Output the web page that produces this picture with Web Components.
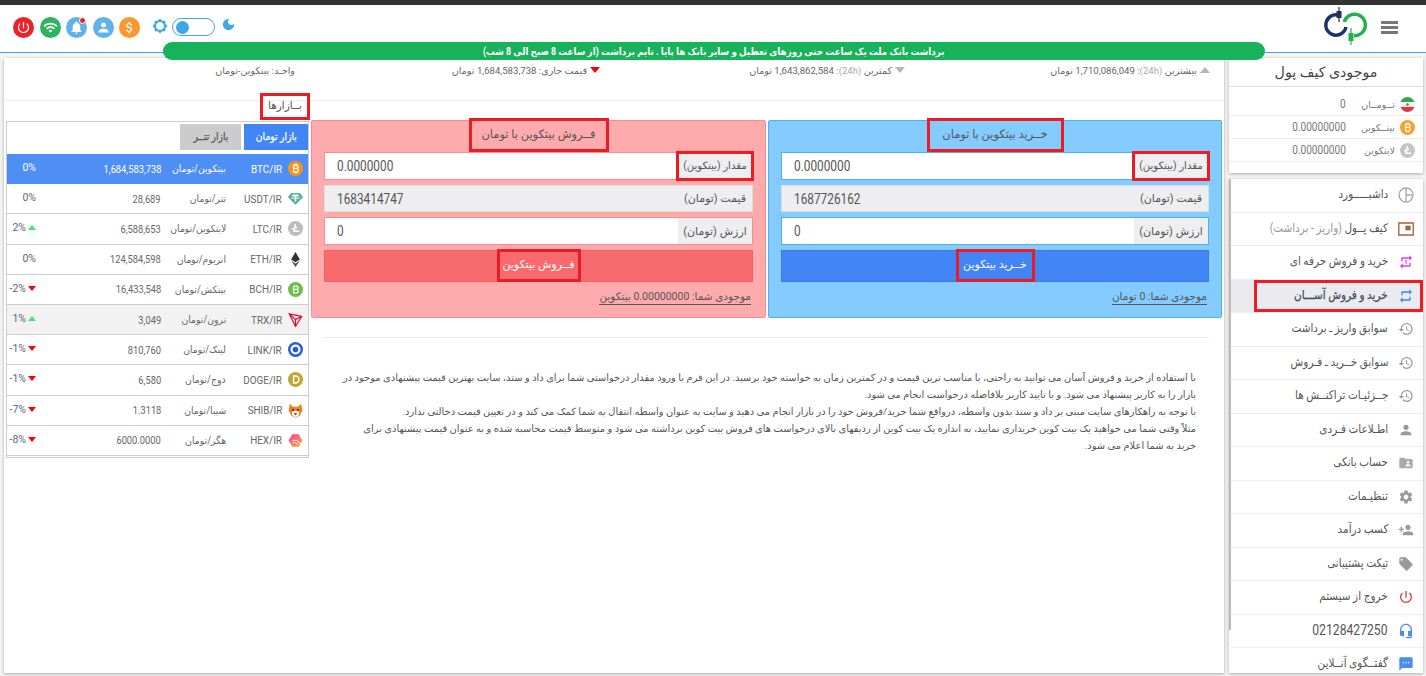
<!DOCTYPE html>
<html lang="fa">
<head>
<meta charset="utf-8">
<title>خرید و فروش آسان</title>
<style>
html,body{margin:0;height:100%;overflow:hidden;background:#f3f3f3}
body{font-family:Roboto,"Noto Sans","DejaVu Sans",sans-serif;color:#555}
stat-bar i{display:inline-block;width:0;height:0;margin-left:3px;vertical-align:1px;border-left:5px solid transparent;border-right:5px solid transparent}
stat-bar i.up{border-bottom:6px solid #b5b5b5}
stat-bar i.down{border-top:6px solid #b5b5b5}
stat-bar i.now{border-top:6px solid #f00}
stat-bar em{color:#aaa;font-style:normal}
</style>
</head>
<body>
<svg width="0" height="0" style="position:absolute">
  <symbol id="i-history" viewBox="0 0 24 24"><path d="M13 3a9 9 0 0 0-9 9H1l3.89 3.89.07.14L9 12H6c0-3.87 3.13-7 7-7s7 3.13 7 7-3.13 7-7 7c-1.93 0-3.68-.79-4.94-2.06l-1.42 1.42A8.954 8.954 0 0 0 13 21a9 9 0 0 0 0-18zm-1 5v5l4.28 2.54.72-1.21-3.5-2.08V8H12z"/></symbol>
  <symbol id="i-person" viewBox="0 0 24 24"><path d="M12 12c2.21 0 4-1.79 4-4s-1.79-4-4-4-4 1.79-4 4 1.79 4 4 4zm0 2c-2.67 0-8 1.34-8 4v2h16v-2c0-2.66-5.33-4-8-4z"/></symbol>
  <symbol id="i-power" viewBox="0 0 24 24"><path d="M13 3h-2v10h2V3zm4.83 2.17l-1.42 1.42A6.92 6.92 0 0 1 19 12c0 3.87-3.13 7-7 7A6.995 6.995 0 0 1 7.58 6.58L6.17 5.17A8.932 8.932 0 0 0 3 12a9 9 0 0 0 18 0c0-2.74-1.23-5.18-3.17-6.83z"/></symbol>
  <symbol id="i-repeat" viewBox="0 0 24 24"><path d="M7 7h10v3l4-4-4-4v3H5v6h2V7zm10 10H7v-3l-4 4 4 4v-3h12v-6h-2v4z"/></symbol>
</svg>

<app-shell>
  <app-header slot="header"></app-header>
  <notice-pill slot="notice">برداشت بانک ملت یک ساعت حتی روزهای تعطیل و سایر بانک ها پایا . تایم برداشت (از ساعت 8 صبح الی 8 شب)</notice-pill>

  <wallet-card slot="side">
    <wallet-row value="0">
      <svg slot="icon" viewBox="0 0 24 24" width="15" height="15"><clipPath id="fc"><circle cx="12" cy="12" r="12"/></clipPath><g clip-path="url(#fc)"><rect width="24" height="8" fill="#2fa84f"/><rect y="8" width="24" height="8" fill="#f4f4f4"/><rect y="16" width="24" height="8" fill="#e0393e"/><circle cx="12" cy="12" r="2" fill="#e0393e"/></g></svg>
      تــومــان
    </wallet-row>
    <wallet-row value="0.00000000">
      <svg slot="icon" viewBox="0 0 24 24" width="15" height="15"><circle cx="12" cy="12" r="12" fill="#f9a02f"/><path d="M9 6.5h4.5a2.6 2.6 0 0 1 0 5.3H9m0 0h5a2.9 2.9 0 0 1 0 5.7H9zM9 6.5v11M11 4.5v2M14 4.5v2M11 17.5v2M14 17.5v2" stroke="#fff" stroke-width="1.8" fill="none"/></svg>
      بیتــکوین
    </wallet-row>
    <wallet-row value="0.00000000">
      <svg slot="icon" viewBox="0 0 24 24" width="15" height="15"><circle cx="12" cy="12" r="12" fill="#c4c4c4"/><path d="M12 5l-2.4 11.5H18M6.500 13l8-3" stroke="#fff" stroke-width="2.400" fill="none"/></svg>
      لایتکوین
    </wallet-row>
  </wallet-card>

  <side-menu slot="side">
    <side-item><svg slot="icon" viewBox="0 0 24 24" fill="none" stroke="#aaa" stroke-width="2"><circle cx="12" cy="12" r="10.500"/><path d="M12 2v20M12 12h10"/></svg>داشبـــــورد</side-item>
    <side-item><svg slot="icon" viewBox="0 0 24 24"><rect x="1" y="3" width="22" height="18" fill="none" stroke="#b0704f" stroke-width="2.500"/><rect x="11" y="7" width="8" height="7" fill="#a5634a"/></svg>کیف پــول <span style="color:#999">(واریز - برداشت)</span></side-item>
    <side-item><svg slot="icon" viewBox="0 0 24 24" fill="#e040e8"><path d="M7 7h10v3l4-4-4-4v3H5v6h2V7zm10 10H7v-3l-4 4 4 4v-3h12v-6h-2v4zm-4-2V9h-1l-2 1v1h1.500v4H13z"/></svg>خرید و فروش حرفه ای</side-item>
    <side-item active><svg slot="icon" viewBox="0 0 24 24" fill="#4285f4"><use href="#i-repeat"/></svg>خرید و فروش آســـان</side-item>
    <side-item><svg slot="icon" viewBox="0 0 24 24" fill="#999"><use href="#i-history"/></svg>سوابق واریز ـ برداشت</side-item>
    <side-item><svg slot="icon" viewBox="0 0 24 24" fill="#999"><use href="#i-history"/></svg>سوابق خــرید ـ فـروش</side-item>
    <side-item><svg slot="icon" viewBox="0 0 24 24" fill="#999"><use href="#i-history"/></svg>جــزئیـات تراکنــش ها</side-item>
    <side-item><svg slot="icon" viewBox="0 0 24 24" fill="#999"><use href="#i-person"/></svg>اطـلاعات فـردی</side-item>
    <side-item><svg slot="icon" viewBox="0 0 24 24" fill="#aaa"><path d="M20 6h-8l-2-2H4c-1.100 0-1.990.9-1.990 2L2 18c0 1.100.9 2 2 2h16c1.100 0 2-.9 2-2V8c0-1.100-.9-2-2-2zm-5 3c1.100 0 2 .9 2 2s-.9 2-2 2-2-.9-2-2 .9-2 2-2zm4 8h-8v-1c0-1.330 2.670-2 4-2s4 .67 4 2v1z"/></svg>حساب بانکی</side-item>
    <side-item><svg slot="icon" viewBox="0 0 24 24" fill="#999"><path d="M19.14 12.94c.04-.3.06-.61.06-.94 0-.32-.02-.64-.07-.94l2.03-1.580a.49.49 0 0 0 .12-.61l-1.920-3.320a.488.488 0 0 0-.59-.22l-2.390.96c-.5-.38-1.030-.7-1.620-.94l-.36-2.540a.484.484 0 0 0-.48-.41h-3.840c-.24 0-.43.17-.47.41l-.36 2.540c-.59.24-1.130.57-1.620.94l-2.390-.96c-.22-.08-.47 0-.59.22L2.740 8.870c-.12.21-.08.47.12.61l2.030 1.580c-.05.3-.09.63-.09.94s.02.64.07.94l-2.030 1.580a.49.49 0 0 0-.12.61l1.920 3.320c.12.22.37.29.59.22l2.390-.96c.5.38 1.030.7 1.620.94l.36 2.540c.05.24.24.41.48.41h3.840c.24 0 .44-.17.47-.41l.36-2.540c.59-.24 1.130-.56 1.620-.94l2.390.96c.22.08.47 0 .59-.22l1.920-3.320c.12-.22.07-.47-.12-.61l-2.010-1.580zM12 15.600c-1.980 0-3.600-1.620-3.600-3.600s1.620-3.600 3.600-3.600 3.600 1.620 3.600 3.600-1.620 3.600-3.600 3.600z"/></svg>تنظیـمات</side-item>
    <side-item><svg slot="icon" viewBox="0 0 24 24" fill="#999"><path d="M15 12c2.210 0 4-1.790 4-4s-1.790-4-4-4-4 1.790-4 4 1.790 4 4 4zm-9-2V7H4v3H1v2h3v3h2v-3h3v-2H6zm9 4c-2.670 0-8 1.340-8 4v2h16v-2c0-2.660-5.330-4-8-4z"/></svg>کسب درآمد</side-item>
    <side-item><svg slot="icon" viewBox="0 0 24 24" fill="#999"><path d="M21.410 11.580l-9-9C12.050 2.220 11.550 2 11 2H4c-1.100 0-2 .9-2 2v7c0 .55.22 1.050.59 1.420l9 9c.36.36.86.58 1.410.58.55 0 1.050-.22 1.410-.59l7-7c.37-.36.59-.86.59-1.410 0-.55-.23-1.060-.59-1.420zM5.500 7C4.670 7 4 6.330 4 5.500S4.670 4 5.500 4 7 4.670 7 5.500 6.330 7 5.500 7z"/></svg>تیکت پشتیبانی</side-item>
    <side-item><svg slot="icon" viewBox="0 0 24 24" fill="#e0393e"><use href="#i-power"/></svg>خروج از سیستم</side-item>
    <side-item><svg slot="icon" viewBox="0 0 24 24" fill="#4b8bf4"><path d="M12 1c-4.970 0-9 4.030-9 9v7c0 1.660 1.340 3 3 3h3v-8H5v-2c0-3.870 3.130-7 7-7s7 3.130 7 7v2h-4v8h4v1h-7v2h6c1.660 0 3-1.340 3-3V10c0-4.970-4.030-9-9-9z"/></svg><span style="font-size:14px">02128427250</span></side-item>
    <side-item><svg slot="icon" viewBox="0 0 24 24" fill="#4b8bf4"><path d="M20 2H4c-1.100 0-1.990.9-1.990 2L2 22l4-4h14c1.100 0 2-.9 2-2V4c0-1.100-.9-2-2-2zM9 11H7V9h2v2zm4 0h-2V9h2v2zm4 0h-2V9h2v2z"/></svg>گفتــگوی آنــلاین</side-item>
  </side-menu>

  <main-panel slot="main">
    <stat-bar>
      <span><i class="up"></i>بیشترین <em>(24h)</em>: 1,710,086,049 تومان</span>
      <span><i class="down"></i>کمترین <em>(24h)</em>: 1,643,862,584 تومان</span>
      <span><i class="now"></i>قیمت جاری: 1,684,583,738 تومان</span>
      <span>واحـد: بیتکوین-تومان</span>
    </stat-bar>

    <div slot="trade">
      <trade-card kind="buy" title-text="خــرید بیتکوین با تومان" price="1687726162" action="خــرید بیتکوین" balance="موجودی شما: 0 تومان" tw="131" bw="73"></trade-card>
      <trade-card kind="sell" title-text="فــروش بیتکوین با تومان" price="1683414747" action="فــروش بیتکوین" balance="موجودی شما: 0.00000000 بیتکوین" tw="134" bw="78"></trade-card>
    </div>

    <info-text slot="info">
با استفاده از خرید و فروش آسان می توانید به راحتی، با مناسب ترین قیمت و در کمترین زمان به خواسته خود برسید. در این فرم با ورود مقدار درخواستی شما برای داد و ستد، سایت بهترین قیمت پیشنهادی موجود در<br>
بازار را به کاربر پیشنهاد می شود. و با تایید کاربر بلافاصله درخواست انجام می شود.<br>
با توجه به راهکارهای سایت مبنی بر داد و ستد بدون واسطه، درواقع شما خرید/فروش خود را در بازار انجام می دهید و سایت به عنوان واسطه انتقال به شما کمک می کند و در تعیین قیمت دخالتی ندارد.<br>
مثلاً وقتی شما می خواهید یک بیت کوین خریداری نمایید، به اندازه یک بیت کوین از ردیفهای بالای درخواست های فروش بیت کوین برداشته می شود و متوسط قیمت محاسبه شده و به عنوان قیمت پیشنهادی برای<br>
خرید به شما اعلام می شود.
    </info-text>

    <market-list slot="markets">
      <market-row sym="BTC/IR" name="بیتکوین/تومان" price="1,684,583,738" pct="0%" active>
        <svg slot="icon" viewBox="0 0 24 24"><circle cx="12" cy="12" r="12" fill="#f7931a"/><path d="M9 6.500h4.500a2.600 2.600 0 0 1 0 5.300H9m0 0h5a2.900 2.900 0 0 1 0 5.700H9zM9 6.500v11M11 4.500v2M14 4.500v2M11 17.500v2M14 17.500v2" stroke="#fff" stroke-width="1.800" fill="none"/></svg>
      </market-row>
      <market-row sym="USDT/IR" name="تتر/تومان" price="28,689" pct="0%">
        <svg slot="icon" viewBox="0 0 24 24"><path d="M5 3h14l5 7-12 12L0 10z" fill="#53ae94"/><path d="M7 7h10M12 7v10" stroke="#fff" stroke-width="2.600"/><ellipse cx="12" cy="11" rx="7" ry="1.500" fill="none" stroke="#fff"/></svg>
      </market-row>
      <market-row sym="LTC/IR" name="لایتکوین/تومان" price="6,588,653" pct="2%" dir="up">
        <svg slot="icon" viewBox="0 0 24 24"><circle cx="12" cy="12" r="12" fill="#bdbdbd"/><path d="M12 5l-2.400 11.500H18M6.500 13l8-3" stroke="#fff" stroke-width="2.400" fill="none"/></svg>
      </market-row>
      <market-row sym="ETH/IR" name="اتریوم/تومان" price="124,584,598" pct="0%">
        <svg slot="icon" viewBox="0 0 24 24"><path d="M12 0l7 12-7 4.500L5 12z" fill="#333"/><path d="M12 18.500l7-4.500-7 10-7-10z" fill="#555"/></svg>
      </market-row>
      <market-row sym="BCH/IR" name="بیتکش/تومان" price="16,433,548" pct="-2%" dir="down">
        <svg slot="icon" viewBox="0 0 24 24"><circle cx="12" cy="12" r="12" fill="#6cbf47"/><path d="M9 6.500h4.500a2.600 2.600 0 0 1 0 5.300H9m0 0h5a2.900 2.900 0 0 1 0 5.700H9zM9 6.500v11" stroke="#fff" stroke-width="2" fill="none"/></svg>
      </market-row>
      <market-row sym="TRX/IR" name="ترون/تومان" price="3,049" pct="1%" dir="up" shade>
        <svg slot="icon" viewBox="0 0 24 24" fill="none" stroke="#ef0027" stroke-width="1.800"><path d="M2 3l20 4-10 16zM2 3l10 9 10-5M12 12v11"/></svg>
      </market-row>
      <market-row sym="LINK/IR" name="لینک/تومان" price="810,760" pct="-1%" dir="down">
        <svg slot="icon" viewBox="0 0 24 24"><circle cx="12" cy="12" r="12" fill="#2a5ada"/><circle cx="12" cy="12" r="8" fill="#fff"/><circle cx="12" cy="12" r="4.500" fill="#2a5ada"/></svg>
      </market-row>
      <market-row sym="DOGE/IR" name="دوج/تومان" price="6,580" pct="-1%" dir="down">
        <svg slot="icon" viewBox="0 0 24 24"><circle cx="12" cy="12" r="12" fill="#c2a633"/><path d="M9 6.500h3a5.500 5.500 0 0 1 0 11H9z" fill="none" stroke="#fff" stroke-width="2.400"/></svg>
      </market-row>
      <market-row sym="SHIB/IR" name="شیبا/تومان" price="1.3118" pct="-7%" dir="down">
        <svg slot="icon" viewBox="0 0 24 24"><path d="M3 1l5 5h8l5-5 2 11-4 8-7 4-7-4-4-8z" fill="#f0801e"/><path d="M6 14l6-2 6 2-1 6-5 3-5-3z" fill="#fff"/><circle cx="8" cy="11" r="1.500" fill="#222"/><circle cx="16" cy="11" r="1.500" fill="#222"/><path d="M9 16h6l-3 4z" fill="#d8342c"/></svg>
      </market-row>
      <market-row sym="HEX/IR" name="هگز/تومان" price="6000.0000" pct="-8%" dir="down">
        <svg slot="icon" viewBox="0 0 24 24"><defs><linearGradient id="hx" x1="0" y1="0" x2="1" y2="1"><stop offset="0" stop-color="#ff2fb0"/><stop offset="1" stop-color="#ffb020"/></linearGradient></defs><path d="M7 2h10l6 10-6 10H7L1 12z" fill="url(#hx)"/><path d="M7 16a7 7 0 0 1 9 3M7 12a11 11 0 0 1 13 6" stroke="#fff" stroke-width="1.500" fill="none"/></svg>
      </market-row>
    </market-list>
  </main-panel>
</app-shell>

<script>
// each element gets its own template, its markup and styles stay in the shadow root
function tpl(html){
    const t=document.createElement('template');
    t.innerHTML=html;
    return t;
}
function plain(name,html){
    const t=tpl(html);
    customElements.define(name,class extends HTMLElement{
        constructor(){
            super();
            this.attachShadow({mode:'open'}).appendChild(t.content.cloneNode(true));
        }
    });
}

plain('app-shell',`
<style>
:host{display:flex;flex-direction:column;height:676px;direction:rtl;overflow:hidden}
.body{display:grid;grid-template-columns:194px 1220px;gap:5px;margin:-2px 3px 0 4px;flex:1;min-height:0}
.side{display:flex;flex-direction:column;gap:6px;min-height:0;height:615px}
.main{display:flex;height:615px}
.pill{position:relative;z-index:2;margin:-11px 161px 0 163px}
</style>
<slot name="header"></slot>
<div class="pill"><slot name="notice"></slot></div>
<div class="body">
  <div class="side"><slot name="side"></slot></div>
  <div class="main"><slot name="main"></slot></div>
</div>`);

plain('app-header',`
<style>
:host{display:flex;justify-content:space-between;align-items:center;height:44px;padding:0 28px 3px 13px;
      background:#fff;border-top:5px solid #333;border-bottom:1px solid #42a5e5;direction:rtl}
.brand{display:flex;align-items:center;gap:13px}
.burger{display:flex;flex-direction:column;gap:2px;width:17px}
.burger b{display:block;height:3px;background:#777}
.tools{display:flex;direction:ltr;align-items:center}
.ic{width:21px;height:21px;border-radius:50%;display:flex;align-items:center;justify-content:center;margin-right:5.500px;position:relative}
.ic svg{width:15px;height:15px;fill:#fff}
.dot{position:absolute;top:0;right:1px;width:7px;height:7px;border-radius:50%;background:#e8232a;border:1px solid #fff;box-sizing:border-box}
.sun{width:16px;height:16px;fill:#42a5e5;margin:-2px 4px 0 6.500px}
.toggle{width:41px;border:1px solid #42a5e5;border-radius:10px;display:flex;align-items:center;background:#fff;height:16px}
.toggle b{width:13px;height:13px;border-radius:50%;background:#42a5e5;margin-left:3px}
.moon{width:15px;height:15px;fill:#42a5e5;margin:-5px 0 0 6px}
</style>
<div class="brand">
  <div class="burger"><b></b><b></b><b></b></div>
  <svg width="46" height="40" viewBox="0 0 46 40">
    <path d="M16 8A10.200 10.200 0 1 0 24 20" fill="none" stroke="#1d3166" stroke-width="3.400"/>
    <path d="M17 0v15" stroke="#1d3166" stroke-width="1.200"/><rect x="14.500" y="4" width="5" height="7" fill="#1d3166"/>
    <path d="M22.200 15A10.800 10.800 0 1 1 32 28.800" fill="none" stroke="#22b24c" stroke-width="3.400"/>
    <path d="M29 21v17" stroke="#22b24c" stroke-width="1.200"/><rect x="26.500" y="26" width="5" height="8" fill="#22b24c"/>
  </svg>
</div>
<div class="tools">
  <div class="ic" style="background:#e8232a"><svg viewBox="0 0 24 24"><path d="M13 3h-2v10h2V3zm4.830 2.170l-1.420 1.420A6.920 6.920 0 0 1 19 12c0 3.870-3.130 7-7 7A6.995 6.995 0 0 1 7.580 6.580L6.170 5.170A8.932 8.932 0 0 0 3 12a9 9 0 0 0 18 0c0-2.740-1.230-5.180-3.170-6.830z"/></svg></div>
  <div class="ic" style="background:#2db45c"><svg viewBox="0 0 24 24"><path d="M1 9l2 2c4.970-4.970 13.030-4.970 18 0l2-2C16.930 2.930 7.080 2.930 1 9zm8 8l3 3 3-3c-1.650-1.660-4.340-1.660-6 0zm-4-4l2 2c2.760-2.760 7.240-2.760 10 0l2-2C15.140 9.140 8.870 9.140 5 13z"/></svg></div>
  <div class="ic" style="background:#5fb3ea"><svg viewBox="0 0 24 24"><path d="M12 22c1.100 0 2-.9 2-2h-4c0 1.100.89 2 2 2zm6-6v-5c0-3.070-1.640-5.640-4.500-6.320V4c0-.83-.67-1.500-1.500-1.500s-1.500.67-1.500 1.500v.68C7.630 5.360 6 7.920 6 11v5l-2 2v1h16v-1l-2-2z"/></svg><span class="dot"></span></div>
  <div class="ic" style="background:#5fb3ea"><svg viewBox="0 0 24 24"><path d="M12 12c2.210 0 4-1.790 4-4s-1.790-4-4-4-4 1.790-4 4 1.790 4 4 4zm0 2c-2.670 0-8 1.340-8 4v2h16v-2c0-2.660-5.330-4-8-4z"/></svg></div>
  <div class="ic" style="background:#f9982b"><svg viewBox="0 0 24 24"><path d="M11.800 10.900c-2.270-.59-3-1.200-3-2.150 0-1.090 1.010-1.850 2.700-1.850 1.780 0 2.440.85 2.500 2.100h2.210c-.07-1.720-1.120-3.300-3.210-3.810V3h-3v2.160c-1.940.42-3.500 1.680-3.500 3.610 0 2.310 1.910 3.460 4.700 4.130 2.500.6 3 1.480 3 2.410 0 .69-.49 1.790-2.700 1.790-2.060 0-2.870-.92-2.980-2.100h-2.200c.12 2.190 1.760 3.420 3.680 3.830V21h3v-2.150c1.950-.37 3.500-1.500 3.500-3.550 0-2.840-2.430-3.810-4.700-4.400z"/></svg></div>
  <svg class="sun" viewBox="0 0 24 24"><path d="M20 15.310L23.310 12 20 8.690V4h-4.690L12 .69 8.690 4H4v4.690L.69 12 4 15.310V20h4.690L12 23.310 15.310 20H20v-4.690zM12 18c-3.310 0-6-2.690-6-6s2.690-6 6-6 6 2.690 6 6-2.690 6-6 6z"/></svg>
  <div class="toggle"><b></b></div>
  <svg class="moon" viewBox="0 0 24 24"><path d="M12 3a9 9 0 1 0 9 9c0-.46-.04-.92-.1-1.360a5.390 5.390 0 0 1-4.400 2.260 5.400 5.400 0 0 1-3.140-9.800c-.44-.06-.9-.1-1.360-.1z"/></svg>
</div>`);

plain('notice-pill',`
<style>
:host{display:flex;align-items:center;justify-content:center;height:18px;border-radius:9px;background:#18b25a;color:#fff;font-size:10px;font-weight:700;white-space:nowrap}
div{transform:scaleX(.875)}
</style>
<div><slot></slot></div>`);

plain('wallet-card',`
<style>
:host{display:block;height:115px;background:#fff;box-shadow:0 1px 3px rgba(0,0,0,.3);flex:none}
h3{margin:0;height:28px;line-height:28px;font-size:14.200px;font-weight:400;color:#444;text-align:center;border-bottom:1px solid #ddd}
</style>
<h3>موجودی کیف پول</h3>
<slot></slot>`);

class WalletRow extends HTMLElement{
    constructor(){
        super();
        this.attachShadow({mode:'open'}).innerHTML=`
<style>
:host{display:flex;align-items:center;box-sizing:border-box;height:23px;padding:0 8px 0 0;border-bottom:1px solid #eee;font-size:9.500px;color:#777}
:host(:first-of-type){height:29px;padding-top:6px}
.icon{width:15px;height:15px;flex:none;margin-left:5px}
.label{width:49px;flex:none;white-space:nowrap}
.value{font-size:12px;direction:ltr;transform:scaleX(.84);transform-origin:right}
</style>
<div class="icon"><slot name="icon"></slot></div>
<div class="label"><slot></slot></div>
<div class="value">${this.getAttribute('value')}</div>`;
    }
}
customElements.define('wallet-row',WalletRow);

plain('side-menu',`
<style>
:host{display:block;flex:1;min-height:0;overflow:hidden;background:linear-gradient(#bbb,#bbb) left top/2px 451px no-repeat #fff;box-shadow:0 1px 3px rgba(0,0,0,.3);padding-left:2px}
</style>
<slot></slot>`);

class SideItem extends HTMLElement{
    constructor(){
        super();
        this.attachShadow({mode:'open'}).innerHTML=`
<style>
:host{display:flex;align-items:center;height:33.500px;box-sizing:border-box;border-bottom:1px solid #eee;padding-right:9px;font-size:12px;color:#555;white-space:nowrap;position:relative}
:host([active]){background:#ebebef;color:#3c4a66;-webkit-text-stroke:.25px #3c4a66}
:host([active])::after{content:"";position:absolute;top:0;bottom:0;right:0;left:23px;border:3px solid #ed1c24;pointer-events:none}
.icon{width:16px;height:16px;flex:none;margin-left:10px}
.icon ::slotted(svg){width:16px;height:16px;display:block}
.text{transform:scaleX(.87);transform-origin:right;padding-bottom:2px}
</style>
<div class="icon"><slot name="icon"></slot></div>
<div class="text"><slot></slot></div>`;
    }
}
customElements.define('side-item',SideItem);

plain('main-panel',`
<style>
:host{display:block;flex:1;background:#fff;box-shadow:0 1px 3px rgba(0,0,0,.3);padding:0 2px}
.stats{margin:0 -2px}
.content{display:grid;grid-template-columns:911px 303px;gap:2px}
.left{padding-top:19px}
.cards ::slotted(div){display:flex;gap:2px}
hr{border:0;border-top:1px solid #e9e9e9;margin:19px 13px 0}
.markets{margin-top:-5px}
.title{display:block;width:44px;height:21px;line-height:19px;margin:0 2px 4px 0;outline:3px solid #ed1c24;outline-offset:0;font-size:10.500px;color:#555;text-align:center;position:relative}
</style>
<div class="stats"><slot></slot></div>
<div class="content">
  <div class="left">
    <div class="cards"><slot name="trade"></slot></div>
    <hr>
    <slot name="info"></slot>
  </div>
  <div class="markets">
    <span class="title">بــازارها</span>
    <slot name="markets"></slot>
  </div>
</div>`);

plain('stat-bar',`
<style>
:host{display:grid;grid-template-columns:repeat(4,1fr);padding-top:6px;height:36px;border-bottom:1px solid #eee;font-size:9.600px;color:#666;line-height:14px}
::slotted(span){padding-right:14px;white-space:nowrap}
</style>
<slot></slot>`);

class TradeCard extends HTMLElement{
    constructor(){
        super();
        const buy=this.getAttribute('kind')=='buy';
        const a=n=>this.getAttribute(n);
        const unit=buy?'#4db0f5':'#ff8a8a';
        this.attachShadow({mode:'open'}).innerHTML=`
<style>
:host{display:flex;flex-direction:column;box-sizing:border-box;height:198px;width:${buy?454:455}px;padding:0 12px;border:1px solid ${unit};border-radius:2px;background:${buy?'#84cbff':'#ffabad'};color:#555}
.title{align-self:center;width:${a('tw')}px;height:28px;line-height:27px;margin:0 0 3px;outline:3px solid #ed1c24;font-size:11.400px;text-align:center;white-space:nowrap;font-weight:400}
.rows{display:flex;flex-direction:column;gap:5px}
.row{display:flex;height:27.670px;box-sizing:border-box;border:1px solid ${unit}}
.row.off{border-color:#ddd}
.label{width:74px;flex:none;display:flex;align-items:center;justify-content:center;background:#eeeef0;font-size:11px;white-space:nowrap}
.label.mark{outline:3px solid #ed1c24;outline-offset:-1px;position:relative;font-size:10.200px}
.field{flex:1;background:#fff;direction:ltr;text-align:left;padding-left:12px;font-size:14px;line-height:26px;color:#555}
.field span{display:inline-block;transform:scaleX(.845);transform-origin:left}
.off .field{background:#eeeef0}
.btn{display:flex;align-items:center;justify-content:center;height:32px;margin-top:5px;background:${buy?'#4285f4':'#f76b6e'};border:1px solid ${buy?'#3c7be4':'#ee6265'};box-sizing:border-box;color:#fff}
.btn span{display:block;width:${a('bw')}px;height:27px;line-height:26px;outline:3px solid #ed1c24;text-align:center;font-size:11px;white-space:nowrap}
.bal{align-self:flex-start;margin:8px 2px 0 0;font-size:10.500px;line-height:14px;border-bottom:1px solid #555}
</style>
<div class="title">${a('title-text')}</div>
<div class="rows">
  <div class="row"><div class="label mark">مقدار (بیتکوین)</div><div class="field"><span>0.0000000</span></div></div>
  <div class="row off"><div class="label">قیمت (تومان)</div><div class="field"><span>${a('price')}</span></div></div>
  <div class="row"><div class="label">ارزش (تومان)</div><div class="field"><span>0</span></div></div>
</div>
<div class="btn"><span>${a('action')}</span></div>
<div class="bal">${a('balance')}</div>`;
    }
}
customElements.define('trade-card',TradeCard);

plain('info-text',`
<style>
:host{display:block;padding:31px 26px 0 0;font-size:9.900px;line-height:17px;color:#555;white-space:nowrap}
</style>
<slot></slot>`);

plain('market-list',`
<style>
:host{display:block;box-sizing:border-box;height:337px;border:1px solid #ccc;background:#fff}
.tabs{display:flex;gap:3px;height:32px;padding:2px 0 0;box-sizing:border-box}
.tabs div{height:26px;line-height:25px;text-align:center;font-size:10.500px;white-space:nowrap;-webkit-text-stroke:.25px currentColor}
.tabs span{display:inline-block;transform:scaleX(.88)}
.on{width:64px;background:#4285f4;color:#fff}
.off{width:61px;background:#ccc;color:#555}
</style>
<div class="tabs"><div class="on"><span>بازار تومان</span></div><div class="off"><span>بازار تتــر</span></div></div>
<slot></slot>`);

class MarketRow extends HTMLElement{
    constructor(){
        super();
        const a=n=>this.getAttribute(n);
        const d=a('dir');
        const arrow=d?`<i class="${d}"></i>`:'';
        this.attachShadow({mode:'open'}).innerHTML=`
<style>
:host{display:grid;grid-template-columns:16px 55px 66px 1fr 55px;align-items:center;height:30.200px;box-sizing:border-box;padding:0 5px 0 1px;border-bottom:1px solid #ccc;color:#666;font-size:11px;white-space:nowrap}
:host([active]){background:#4f8ef5;color:#fff;border-bottom-color:#4f8ef5}
:host([shade]){background:#f2f2f2}
.icon,.icon ::slotted(svg){width:15px;height:15px;display:block}
.sym{font-size:11.500px;direction:ltr;text-align:right;padding-right:5px}
.sym span{display:inline-block;transform:scaleX(.86);transform-origin:right}
.name{font-size:10px;padding-right:6px}
.name span{display:inline-block;transform:scaleX(.93);transform-origin:right}
.price{font-size:11.500px;direction:ltr;text-align:right;padding-right:5px}
.price span{display:inline-block;transform:scaleX(.81);transform-origin:right}
.pct{direction:ltr;display:flex;align-items:center;justify-content:flex-end;gap:2px;padding-right:27px;font-size:10.500px;margin-top:-2px}
i{width:0;height:0;border-left:4.500px solid transparent;border-right:4.500px solid transparent}
i.up{border-bottom:5px solid #3fe86f}
i.down{border-top:5px solid #f00}
</style>
<div class="icon"><slot name="icon"></slot></div>
<div class="sym"><span>${a('sym')}</span></div>
<div class="name"><span>${a('name')}</span></div>
<div class="price"><span>${a('price')}</span></div>
<div class="pct"><span>${a('pct')}</span>${arrow}</div>`;
    }
}
customElements.define('market-row',MarketRow);
</script>
</body>
</html>
